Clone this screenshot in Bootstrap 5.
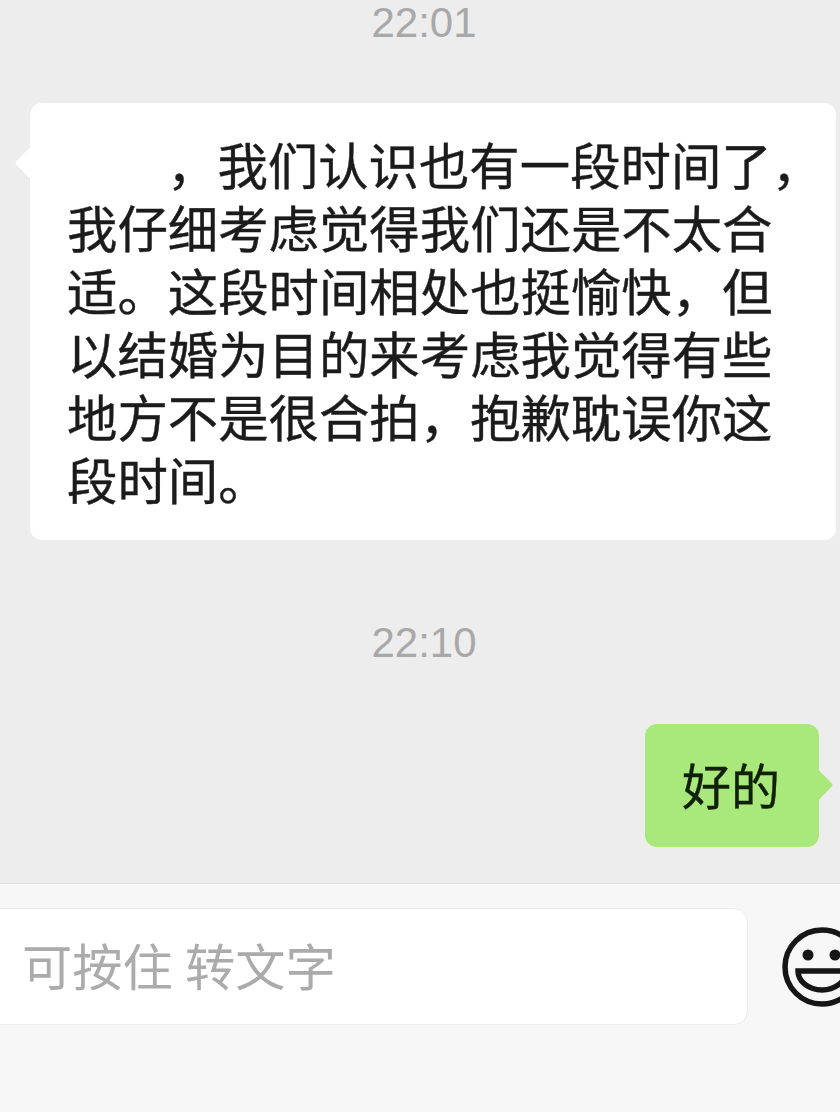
<!DOCTYPE html>
<html lang="zh-CN">
<head>
  <meta charset="UTF-8">
  <meta name="viewport" content="width=device-width, initial-scale=1.0">
  <title>聊天</title>
  <link href="https://cdn.jsdelivr.net/npm/bootstrap@5.3.0/dist/css/bootstrap.min.css" rel="stylesheet">
  <style>
    html, body { height: 100%; overflow: hidden; }
    body { background-color: #ededed; font-family: "Liberation Sans", "Noto Sans CJK SC", sans-serif; }
    .chat-page { height: 1112px; }
    .chat-area { height: 883px; }
    .chat-time { color: #a8a8a8; font-size: 42px; line-height: 60px; text-align: center; padding-left: 8px; }
    .chat-time-first { margin-top: -7px; margin-bottom: 50px; }
    .chat-time-next { margin-top: 73px; margin-bottom: 51px; }
    .chat-bubble { position: relative; border-radius: 12px; color: #1b1b1b; font-family: "Noto Sans CJK SC", sans-serif; font-size: 50.4px; line-height: 63px; white-space: nowrap; -webkit-text-stroke: 0.4px currentColor; }
    .chat-bubble::before { content: ""; position: absolute; width: 22px; height: 22px; transform: rotate(45deg); border-radius: 3px; background: inherit; }
    .bubble-in { background: #fff; margin-left: 30px; margin-right: 4px; padding: 29px 38px 30px 37px; }
    .bubble-in::before { left: -11px; top: 49px; }
    .bubble-out { background: #a9e87a; margin-right: 21px; color: #10200a; font-size: 49px; padding: 28px 39px 32px 37px; }
    .bubble-out::before { right: -10px; top: 50px; }
    .name-gap { display: inline-block; width: 100px; }
    .chat-footer { height: 229px; background: #f7f7f7; border-top: 1px solid #dfdfdf; padding-top: 24px; }
    .voice-box { width: 768px; height: 117px; margin-left: -20px; flex-shrink: 0; padding-left: 41px; padding-bottom: 4px; background: #fff; border: 1px solid #ececec; border-radius: 14px; color: #ababab; font-family: "Noto Sans CJK SC", sans-serif; font-size: 50.3px; }
    .voice-word { margin-left: 12px; }
    .smile-icon { width: 80px; height: 80px; flex-shrink: 0; margin-left: 34px; margin-top: 19px; }
  </style>
</head>
<body>

  <div class="chat-page d-flex flex-column">
    <div class="chat-area">
      <div class="chat-time chat-time-first">22:01</div>
      <div class="chat-bubble bubble-in">
        <span class="name-gap"></span>，我们认识也有一段时间了，<br>
        我仔细考虑觉得我们还是不太合<br>
        适。这段时间相处也挺愉快，但<br>
        以结婚为目的来考虑我觉得有些<br>
        地方不是很合拍，抱歉耽误你这<br>
        段时间。
      </div>
      <div class="chat-time chat-time-next">22:10</div>
      <div class="d-flex justify-content-end">
        <div class="chat-bubble bubble-out">好的</div>
      </div>
    </div>

    <div class="chat-footer d-flex align-items-start">
      <div class="voice-box d-flex align-items-center">可按住<span class="voice-word">转文字</span></div>
      <svg class="smile-icon" viewBox="0 0 80 80" fill="none" stroke="#161616" stroke-width="5.5">
        <circle cx="40" cy="40" r="37"/>
        <circle cx="26" cy="28" r="5.5" fill="#161616" stroke="none"/>
        <circle cx="53" cy="28" r="5.5" fill="#161616" stroke="none"/>
        <path d="M16 44H64A24 19 0 0 1 16 44Z"/>
      </svg>
    </div>
  </div>

  <script src="https://cdn.jsdelivr.net/npm/bootstrap@5.3.0/dist/js/bootstrap.bundle.min.js"></script>
</body>
</html>
